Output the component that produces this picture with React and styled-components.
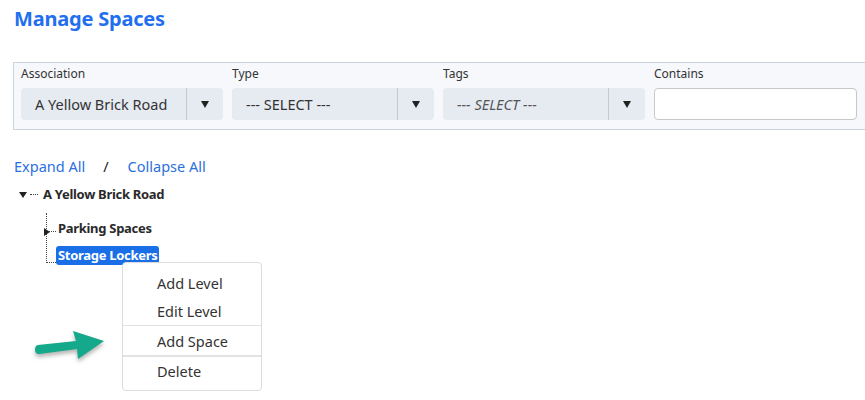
import styled, { createGlobalStyle } from 'styled-components';

const GlobalStyle = createGlobalStyle`
  body {
    margin: 0;
    background: #fff;
    font-family: 'Noto Sans', 'Open Sans', Arial, sans-serif;
    overflow: hidden;
  }
`;

const Page = styled.div`
  position: relative;
  width: 865px;
  height: 400px;
  overflow: hidden;
  padding: 5px 0 0 14px;
  box-sizing: border-box;
`;

const Title = styled.h1`
  margin: 0;
  font-size: 20px;
  font-weight: 700;
  color: #1f6fee;
  line-height: 28px;
  letter-spacing: -0.2px;
`;

const FilterPanel = styled.div`
  margin: 29px 0 0 -1px;
  width: 852px;
  box-sizing: border-box;
  background: #f6f8fb;
  border: 1px solid #c9d4df;
  border-right: none;
  padding: 3px 0 9px 7px;
  display: flex;
  gap: 9px;
`;

const Field = styled.div`
  width: 202px;
  display: flex;
  flex-direction: column;
`;

const Label = styled.div`
  font-size: 12px;
  color: #333;
  line-height: 16px;
  margin-bottom: 6px;
`;

const Select = styled.div`
  height: 32px;
  background: #e6ebf2;
  border-radius: 4px;
  display: flex;
  align-items: center;
`;

const SelectValue = styled.div`
  flex: 1;
  padding-left: 14px;
  font-size: 14.5px;
  color: ${(p) => (p.$muted ? '#555' : '#333')};
  font-style: ${(p) => (p.$italic ? 'italic' : 'normal')};
  white-space: nowrap;
`;

const Caret = styled.div`
  width: 36px;
  height: 100%;
  border-left: 1px solid #c4c9d0;
  display: flex;
  align-items: center;
  justify-content: center;
  &::after {
    content: '';
    border-left: 4px solid transparent;
    border-right: 4px solid transparent;
    border-top: 7px solid #222;
  }
`;

const TextInput = styled.input`
  height: 32px;
  box-sizing: border-box;
  border: 1px solid #c8c8c8;
  border-radius: 4px;
  background: #fff;
  width: 203px;
  outline: none;
`;

const Links = styled.div`
  margin-top: 26px;
  display: flex;
  align-items: center;
  font-size: 14.5px;
  line-height: 20px;
  color: #2c6fe0;
`;

const Slash = styled.span`
  color: #222;
  margin: 0 19px 0 18px;
`;

const Tree = styled.div`
  margin-top: 8px;
  font-size: 13px;
  letter-spacing: -0.3px;
  font-weight: 700;
  color: #2a2a2a;
`;

const RootRow = styled.div`
  display: flex;
  align-items: center;
  height: 20px;
  padding-left: 5px;
`;

const DownToggle = styled.span`
  width: 0;
  height: 0;
  border-left: 4px solid transparent;
  border-right: 4px solid transparent;
  border-top: 6px solid #222;
  margin-top: 1px;
`;

const Dots = styled.span`
  width: 8px;
  border-top: 1px dotted #444;
  margin: 1px 5px 0 3px;
`;

const Children = styled.div`
  position: relative;
  margin: 9px 0 0 32px;
  padding-left: 11px;
  &::before {
    content: '';
    position: absolute;
    left: 0;
    top: 0;
    height: 50px;
    border-left: 1px dotted #444;
  }
`;

const Node = styled.div`
  position: relative;
  display: flex;
  align-items: center;
  height: ${(p) => p.$h}px;
  &::before {
    content: '';
    position: absolute;
    left: -10px;
    top: ${(p) => p.$lineTop}px;
    width: 9px;
    border-top: 1px dotted #444;
  }
`;

const RightToggle = styled.span`
  position: absolute;
  left: -13px;
  top: 15px;
  border-top: 4px solid transparent;
  border-bottom: 4px solid transparent;
  border-left: 6px solid #222;
`;

const NodeLabel = styled.span`
  padding: 0 ${(p) => (p.$selected ? '2px' : '0')};
  margin-left: ${(p) => (p.$selected ? '-1px' : '1px')};
  line-height: 19px;
  border-radius: 3px;
  background: ${(p) => (p.$selected ? '#1a6fe6' : 'transparent')};
  color: ${(p) => (p.$selected ? '#fff' : 'inherit')};
`;

const Menu = styled.div`
  position: absolute;
  left: 122px;
  top: 262px;
  width: 140px;
  box-sizing: border-box;
  background: #fff;
  border: 1px solid #dcdcdc;
  border-radius: 4px;
  padding: 6px 0 5px;
`;

const MenuItem = styled.div`
  height: 28px;
  line-height: 28px;
  padding-left: 34px;
  font-size: 14.5px;
  color: #333;
`;

const Separator = styled.div`
  height: ${(p) => p.$h}px;
  background: #e2e2e2;
  margin-bottom: ${(p) => 2 - p.$h}px;
`;

const Arrow = styled.svg`
  position: absolute;
  left: 30px;
  top: 326px;
  filter: drop-shadow(0 3px 2px rgba(0, 0, 0, 0.3));
`;

const App = () => {
  return (
    <Page>
      <GlobalStyle />
      <Title>Manage Spaces</Title>
      <FilterPanel>
        <Field>
          <Label>Association</Label>
          <Select>
            <SelectValue>A Yellow Brick Road</SelectValue>
            <Caret />
          </Select>
        </Field>
        <Field>
          <Label>Type</Label>
          <Select>
            <SelectValue>--- SELECT ---</SelectValue>
            <Caret />
          </Select>
        </Field>
        <Field>
          <Label>Tags</Label>
          <Select>
            <SelectValue $muted $italic>--- SELECT ---</SelectValue>
            <Caret />
          </Select>
        </Field>
        <Field>
          <Label>Contains</Label>
          <TextInput />
        </Field>
      </FilterPanel>

      <Links>
        <span>Expand All</span>
        <Slash>/</Slash>
        <span>Collapse All</span>
      </Links>

      <Tree>
        <RootRow>
          <DownToggle />
          <Dots />
          <span>A Yellow Brick Road</span>
        </RootRow>
        <Children>
          <Node $h={31} $lineTop={18}>
            <RightToggle />
            <NodeLabel>Parking Spaces</NodeLabel>
          </Node>
          <Node $h={22} $lineTop={18}>
            <NodeLabel $selected>Storage Lockers</NodeLabel>
          </Node>
        </Children>
      </Tree>

      <Arrow width="80" height="40" viewBox="0 0 80 40">
        <path
          d="M8 19 L46 15 L43 5 L74 15 L48 33 L47 23 L9 28 Q5 28 5 23.5 Q5 19.5 8 19 Z"
          fill="#13a98a"
        />
      </Arrow>

      <Menu>
        <MenuItem>Add Level</MenuItem>
        <MenuItem>Edit Level</MenuItem>
        <Separator $h={1} />
        <MenuItem>Add Space</MenuItem>
        <Separator $h={2} />
        <MenuItem>Delete</MenuItem>
      </Menu>
    </Page>
  );
};

export default App;
